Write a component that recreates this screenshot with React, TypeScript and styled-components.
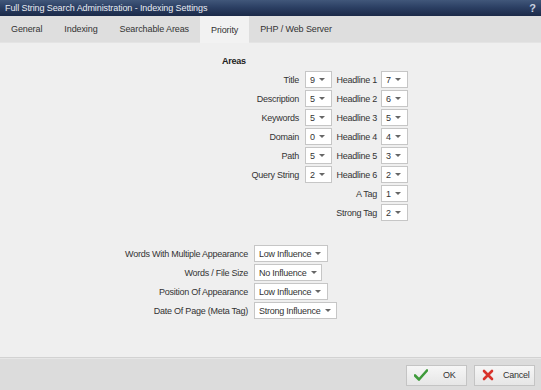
import styled, { createGlobalStyle } from "styled-components";

const Global = createGlobalStyle`
  html, body { margin: 0; padding: 0; }
  body {
    font-family: "Liberation Sans", Arial, sans-serif;
    font-size: 9px;
    letter-spacing: -0.25px;
    color: #222;
    background: #efefef;
  }
`;

const Window = styled.div`
  width: 541px;
  height: 390px;
  display: flex;
  flex-direction: column;
  background: #efefef;
  overflow: hidden;
`;

const TitleBar = styled.div`
  height: 16px;
  display: flex;
  align-items: center;
  justify-content: space-between;
  padding: 0 5px 0 5px;
  background: linear-gradient(to bottom, #41577a 0%, #2c4064 45%, #1b2a48 100%);
  color: #e8ecf3;
  font-size: 9px;
  letter-spacing: -0.1px;
  .help {
    font-weight: bold;
    font-size: 11px;
    letter-spacing: 0;
    color: #c9d2e0;
  }
`;

const TabBar = styled.div`
  height: 26px;
  display: flex;
  background: #dedede;
  border-bottom: 1px solid #e4e4e4;
`;

const Tab = styled.div<{ $active?: boolean }>`
  display: flex;
  align-items: center;
  padding: 0 11px 0 11px;
  font-size: 9px;
  letter-spacing: -0.1px;
  color: #333;
  background: ${(p) => (p.$active ? "#f2f2f2" : "transparent")};
  margin-bottom: ${(p) => (p.$active ? "-1px" : "0")};
`;

const Content = styled.div`
  flex: 1;
  padding-top: 13px;
  display: flex;
  flex-direction: column;
`;

const AreaGrid = styled.div`
  display: grid;
  grid-template-columns: 83px 27px 49px 27px;
  row-gap: 2px;
  margin-left: 222px;
  align-items: center;
`;

const Heading = styled.div`
  grid-column: 1 / span 4;
  font-weight: bold;
  color: #222;
  height: 13px;
`;

const Label = styled.div<{ $pad?: number }>`
  text-align: right;
  white-space: nowrap;
  color: #333;
  padding-right: ${(p) => p.$pad ?? 0}px;
`;

const Select = styled.div<{ $w: number }>`
  width: ${(p) => p.$w}px;
  height: 17px;
  box-sizing: border-box;
  border: 1px solid #c6c6c6;
  background: #fff;
  display: flex;
  align-items: center;
  justify-content: space-between;
  padding: 0 6px 0 4px;
  color: #333;
  white-space: nowrap;
  &::after {
    content: "";
    border-left: 3px solid transparent;
    border-right: 3px solid transparent;
    border-top: 3px solid #666;
    margin-left: 4px;
  }
`;

const InfluenceGrid = styled.div`
  display: grid;
  grid-template-columns: 148px auto;
  column-gap: 6px;
  row-gap: 2px;
  margin-left: 100px;
  margin-top: 24px;
  align-items: center;
  justify-items: start;
  ${Label} {
    justify-self: end;
  }
`;

const Footer = styled.div`
  height: 32px;
  border-top: 1px solid #d2d2d2;
  box-shadow: inset 0 1px 0 #e6e6e6;
  background: #dcdcdc;
  display: flex;
  justify-content: flex-end;
  align-items: center;
  gap: 7px;
  padding-right: 6px;
`;

const Button = styled.button`
  width: 61px;
  height: 21px;
  border: 1px solid #c4c4c4;
  background: linear-gradient(to bottom, #f6f6f6, #e6e6e6);
  font-family: "Liberation Sans", Arial, sans-serif;
  font-size: 9px;
  letter-spacing: -0.25px;
  color: #333;
  display: flex;
  align-items: center;
  gap: 9px;
  padding: 0 0 0 7px;
  margin-top: 2px;
`;

const areaRows: [string, string, string, string][] = [
  ["Title", "9", "Headline 1", "7"],
  ["Description", "5", "Headline 2", "6"],
  ["Keywords", "5", "Headline 3", "5"],
  ["Domain", "0", "Headline 4", "4"],
  ["Path", "5", "Headline 5", "3"],
  ["Query String", "2", "Headline 6", "2"],
  ["", "", "A Tag", "1"],
  ["", "", "Strong Tag", "2"],
];

const influenceRows: [string, string, number][] = [
  ["Words With Multiple Appearance", "Low Influence", 74],
  ["Words / File Size", "No Influence", 68],
  ["Position Of Appearance", "Low Influence", 74],
  ["Date Of Page (Meta Tag)", "Strong Influence", 83],
];

const tabs = ["General", "Indexing", "Searchable Areas", "Priority", "PHP / Web Server"];

export default function App() {
  return (
    <Window>
      <Global />
      <TitleBar>
        <span>Full String Search Administration - Indexing Settings</span>
        <span className="help">?</span>
      </TitleBar>
      <TabBar>
        {tabs.map((t) => (
          <Tab key={t} $active={t === "Priority"}>
            {t}
          </Tab>
        ))}
      </TabBar>
      <Content>
        <AreaGrid>
          <Heading>Areas</Heading>
          {areaRows.map(([l1, v1, l2, v2], i) => [
            <Label key={`a${i}`} $pad={6}>{l1}</Label>,
            v1 ? <Select key={`b${i}`} $w={27}>{v1}</Select> : <div key={`b${i}`} />,
            <Label key={`c${i}`} $pad={4}>{l2}</Label>,
            <Select key={`d${i}`} $w={27}>{v2}</Select>,
          ])}
        </AreaGrid>
        <InfluenceGrid>
          {influenceRows.map(([label, value, w]) => [
            <Label key={`l${label}`}>{label}</Label>,
            <Select key={`s${label}`} $w={w}>{value}</Select>,
          ])}
        </InfluenceGrid>
      </Content>
      <Footer>
        <Button>
          <svg width="14" height="12" viewBox="0 0 14 12">
            <path d="M1 6.5 L5 10.5 L13 1.5" fill="none" stroke="#3e9a3a" strokeWidth="2.6" strokeLinecap="round" strokeLinejoin="round" />
          </svg>
          <span style={{ marginLeft: 6 }}>OK</span>
        </Button>
        <Button>
          <svg width="12" height="12" viewBox="0 0 12 12">
            <path d="M2 2 L10 10 M10 2 L2 10" stroke="#d8332b" strokeWidth="2.6" strokeLinecap="round" />
          </svg>
          <span>Cancel</span>
        </Button>
      </Footer>
    </Window>
  );
}
